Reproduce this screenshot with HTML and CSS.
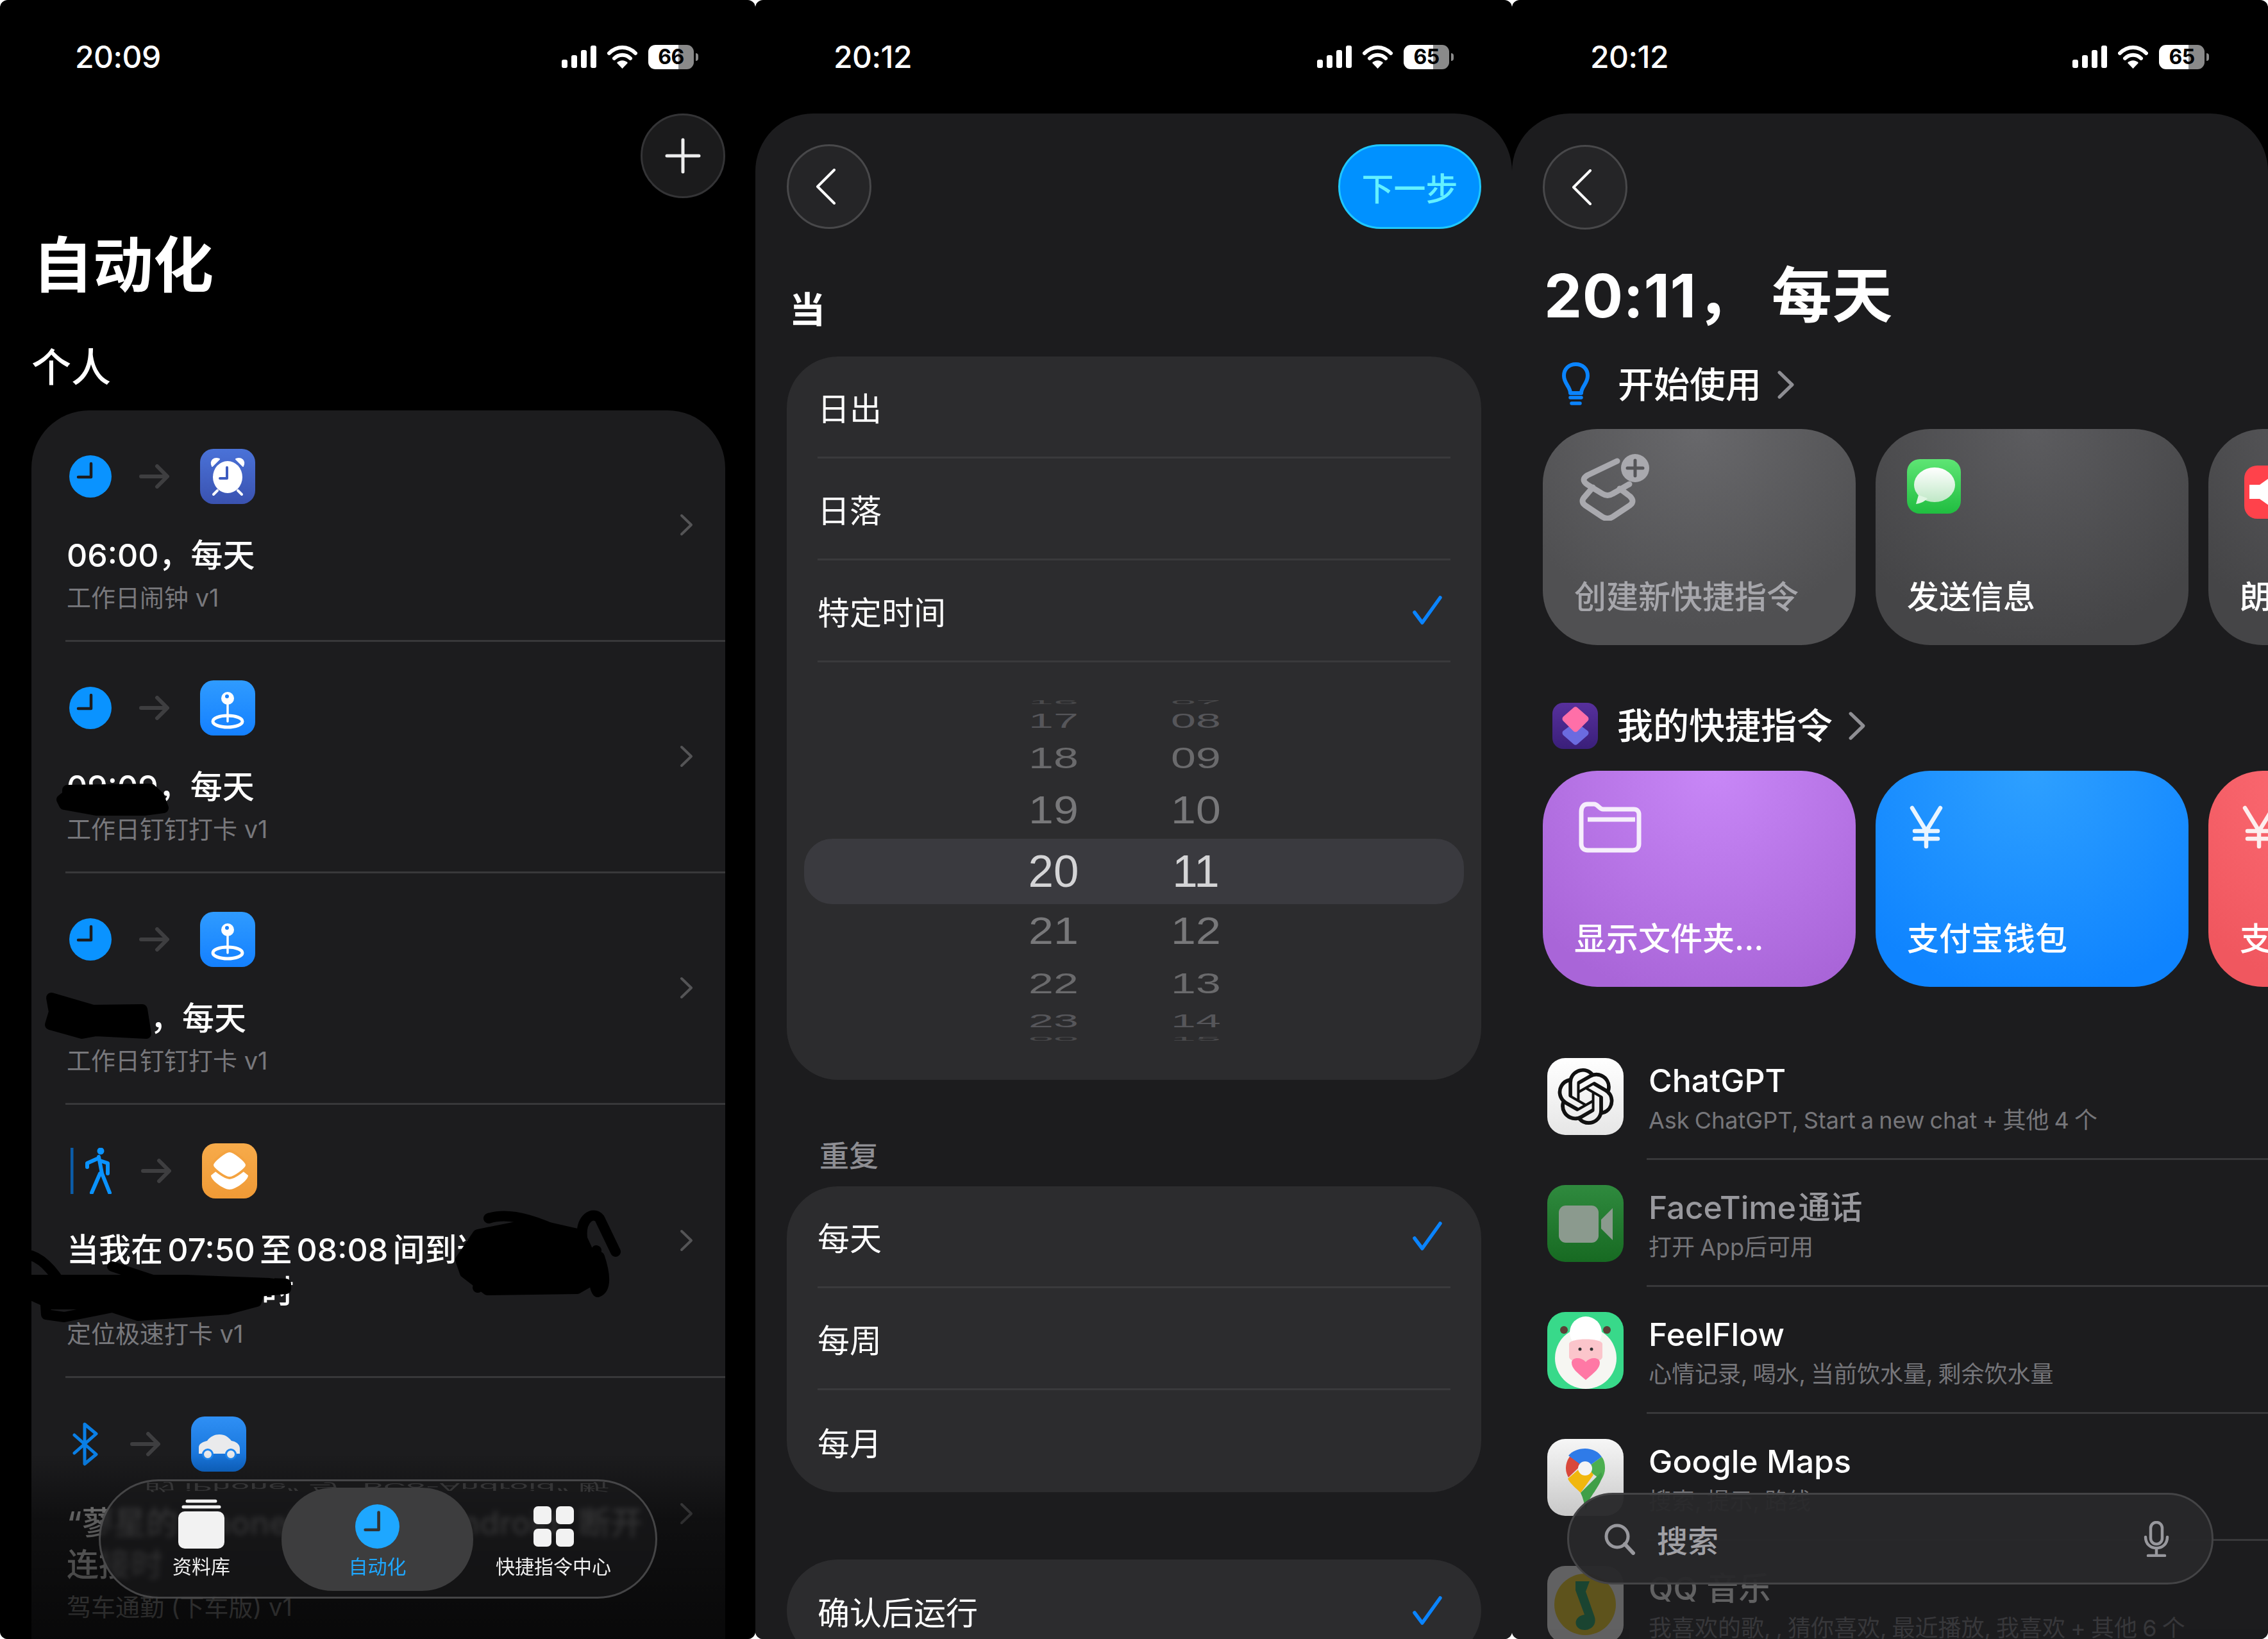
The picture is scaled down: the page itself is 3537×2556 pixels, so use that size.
FILE: index.html
```html
<!DOCTYPE html>
<html lang="zh-CN">
<head>
    <meta charset="UTF-8">
    <title>快捷指令</title>
    <link rel="stylesheet" href="styles.css">
</head>
<body>
    <svg class="sprites" width="0" height="0">
        <symbol id="signal" viewBox="0 0 54 35"><rect x="0" y="22" width="9" height="13" rx="3"/><rect x="15" y="15" width="9" height="20" rx="3"/><rect x="30" y="7" width="9" height="28" rx="3"/><rect x="45" y="0" width="9" height="35" rx="3"/></symbol>
        <symbol id="wifi" viewBox="0 0 47 36"><path d="M3 12C15 0 32 0 44 12" fill="none" stroke="#fff" stroke-width="6" stroke-linecap="round"/><path d="M11 20C18 13 29 13 36 20" fill="none" stroke="#fff" stroke-width="6" stroke-linecap="round"/><path d="M23.500 36L15 27C20 22 27 22 32 27Z" fill="#fff"/></symbol>
        <symbol id="clock" viewBox="0 0 66 66"><circle cx="33" cy="33" r="33" fill="#0a93ff"/><path d="M34 13V34H14" fill="none" stroke="#1c1c1e" stroke-width="4.500" stroke-linecap="round" stroke-linejoin="round"/></symbol>
        <symbol id="arrow" viewBox="0 0 47 38"><path d="M3 19H43M28 3L44 19L28 35" fill="none" stroke="#3e3e40" stroke-width="6" stroke-linecap="round" stroke-linejoin="round"/></symbol>
        <symbol id="chev" viewBox="0 0 21 35"><path d="M3 3L18 17.500L3 32" fill="none" stroke="currentColor" stroke-width="4" stroke-linecap="round" stroke-linejoin="round"/></symbol>
        <symbol id="back" viewBox="0 0 32 56"><path d="M29 2L3 28L29 54" fill="none" stroke="#fff" stroke-width="4" stroke-linecap="round" stroke-linejoin="round"/></symbol>
        <symbol id="check" viewBox="0 0 46 46"><path d="M3 26L15 42L43 3" fill="none" stroke="#0a84ff" stroke-width="5.500" stroke-linecap="round" stroke-linejoin="round"/></symbol>
        <symbol id="alarm" viewBox="0 0 86 86"><path d="M19 27C15 18 22 13 30 16ZM67 27C71 18 64 13 56 16Z" fill="#fff" stroke="#fff" stroke-width="2" stroke-linejoin="round"/><ellipse cx="43" cy="44" rx="23" ry="25" fill="#fff"/><path d="M27 65L21 71M59 65L65 71" stroke="#fff" stroke-width="4" stroke-linecap="round"/><path d="M42 29V46H31" fill="none" stroke="#3d5cc0" stroke-width="4" stroke-linecap="round" stroke-linejoin="round"/></symbol>
        <symbol id="pin" viewBox="0 0 86 86"><ellipse cx="43" cy="64" rx="23" ry="9" fill="none" stroke="#fff" stroke-width="5"/><path d="M43 36V64" stroke="#fff" stroke-width="3.500" stroke-linecap="round"/><circle cx="43" cy="28" r="10" fill="#fff"/><circle cx="42" cy="25" r="3" fill="#1a84ff"/></symbol>
        <symbol id="layers" viewBox="0 0 86 86"><path d="M14 50L29 38L43 47L57 38L72 50C72 58 52 72 43 72C34 72 14 58 14 50Z" fill="#fff"/><path d="M43 12C50 12 70 28 70 34C70 40 50 54 43 54C36 54 16 40 16 34C16 28 36 12 43 12Z" fill="#fff" stroke="#f4a340" stroke-width="4"/></symbol>
        <symbol id="car" viewBox="0 0 86 86"><path d="M12 58V48C12 42 20 39 25 38C30 31 37 28 44 28C53 28 58 32 63 38C70 39 76 43 76 50V58Z" fill="#eaeaec"/><circle cx="26" cy="59" r="7.500" fill="#eaeaec" stroke="#1e86f0" stroke-width="3"/><circle cx="62" cy="59" r="7.500" fill="#eaeaec" stroke="#1e86f0" stroke-width="3"/></symbol>
    </svg>

    <main class="screens">
        <!-- automations -->
        <section class="phone">
            <header class="status status-first">
                <span class="status-time">20:09</span>
                <span class="status-icons">
                    <svg class="ic-signal"><use href="#signal"/></svg>
                    <svg class="ic-wifi"><use href="#wifi"/></svg>
                    <span class="battery batt-66">66</span>
                </span>
            </header>
            <div class="top-actions">
                <button type="button" class="glass-btn"><svg width="56" height="56" viewBox="0 0 56 56"><path d="M28 3V53M3 28H53" stroke="#eee" stroke-width="5" stroke-linecap="round"/></svg></button>
            </div>
            <h1 class="auto-title">自动化</h1>
            <h2 class="auto-sub">个人</h2>
            <div class="auto-card">
                <div class="auto-row">
                    <div class="auto-main">
                        <div class="flow"><svg class="trig-clock"><use href="#clock"/></svg><svg class="flow-arrow"><use href="#arrow"/></svg><span class="app-ic bg-indigo"><svg><use href="#alarm"/></svg></span></div>
                        <div class="auto-name">06:00，每天</div>
                        <div class="auto-note">工作日闹钟 v1</div>
                    </div>
                    <svg class="row-chev"><use href="#chev"/></svg>
                </div>
                <div class="auto-row">
                    <div class="auto-main">
                        <div class="flow"><svg class="trig-clock"><use href="#clock"/></svg><svg class="flow-arrow"><use href="#arrow"/></svg><span class="app-ic bg-blue"><svg><use href="#pin"/></svg></span></div>
                        <div class="auto-name">09:09，每天</div>
                        <div class="auto-note">工作日钉钉打卡 v1</div>
                    </div>
                    <svg class="row-chev"><use href="#chev"/></svg>
                </div>
                <div class="auto-row">
                    <div class="auto-main">
                        <div class="flow"><svg class="trig-clock"><use href="#clock"/></svg><svg class="flow-arrow"><use href="#arrow"/></svg><span class="app-ic bg-blue"><svg><use href="#pin"/></svg></span></div>
                        <div class="auto-name"><span class="hidden-time"></span>，每天</div>
                        <div class="auto-note">工作日钉钉打卡 v1</div>
                    </div>
                    <svg class="row-chev"><use href="#chev"/></svg>
                </div>
                <div class="auto-row">
                    <div class="auto-main">
                        <div class="flow">
                            <svg class="trig-walk" viewBox="0 0 67 72"><path d="M2 0V72" stroke="#0b5ca8" stroke-width="5"/><circle cx="47" cy="5" r="5.500" fill="#0a93ff"/><path d="M44 14L49 40L61 70M46 40L33 70M44 16L26 24V30M46 20L58 24V40" fill="none" stroke="#0a93ff" stroke-width="6" stroke-linecap="round" stroke-linejoin="round"/></svg>
                            <svg class="flow-arrow"><use href="#arrow"/></svg><span class="app-ic bg-orange"><svg><use href="#layers"/></svg></span>
                        </div>
                        <div class="auto-name">当我在 07:50 至 08:08 间到达<br><span class="hidden-place"></span>时</div>
                        <div class="auto-note">定位极速打卡 v1</div>
                    </div>
                    <svg class="row-chev"><use href="#chev"/></svg>
                </div>
                <div class="auto-row auto-row-last">
                    <div class="auto-main">
                        <div class="flow">
                            <svg class="trig-bt" viewBox="0 0 40 68"><path d="M3 20L37 50L19 65V3L37 18L3 48" fill="none" stroke="#0a7fe6" stroke-width="5" stroke-linejoin="round" stroke-linecap="round"/></svg>
                            <svg class="flow-arrow"><use href="#arrow"/></svg><span class="app-ic bg-car"><svg><use href="#car"/></svg></span>
                        </div>
                        <div class="auto-name">“蓼星的 iPhone” 与 “BC8-Android” 断开<br>连接时</div>
                        <div class="auto-note">驾车通勤 (下车版) v1</div>
                    </div>
                    <svg class="row-chev"><use href="#chev"/></svg>
                </div>
            </div>

            <!-- marker scribbles over the private bits -->
            <svg class="scribbles" viewBox="0 0 1178 2556">
                <g fill="#000" stroke="#000" stroke-width="16" stroke-linecap="round" stroke-linejoin="round">
                    <path d="M105 1232L235 1230L248 1242L255 1260L225 1264L150 1264L100 1255L96 1247L105 1240Z"/>
                    <path d="M80 1556L145 1575L222 1574L228 1612L150 1608L128 1612L78 1598L84 1578Z"/>
                    <path d="M745 1925L830 1908L905 1925L935 1990L900 2010L760 2012L725 1985L718 1965Z"/>
                    <path fill="none" d="M762 1900C800 1888 850 1910 880 1925M908 1930C905 1900 925 1888 935 1900L960 1952M935 1960C945 1990 945 2010 932 2015C925 2010 925 1975 930 1950M745 2008L790 1975"/>
                    <path d="M49 1996L290 1996L340 1998L446 2002L446 2010L405 2014L400 2030L355 2042L215 2052L160 2034L80 2034L49 2020Z"/>
                    <path fill="none" d="M49 1958C70 1965 90 1990 105 2020M70 2020L72 2050L100 2054L190 2036M175 1975L280 2010"/>
                </g>
            </svg>
            <div class="fade-bottom"></div>

            <nav class="tabbar">
                <span class="tab-mirror">的 iPhone” 与 “BC8-Android” 断</span>
                <div class="tab tab-left">
                    <svg class="tab-ic" width="72" height="77" viewBox="0 0 72 77"><path d="M14 3H58M8 12H64" stroke="#f2f2f2" stroke-width="5" stroke-linecap="round"/><rect y="19" width="72" height="58" rx="10" fill="#f2f2f2"/></svg>
                    <span class="tab-label">资料库</span>
                </div>
                <div class="tab tab-on">
                    <svg class="tab-ic" width="69" height="69" viewBox="0 0 66 66"><circle cx="33" cy="33" r="33" fill="#1ea7ff"/><path d="M35 12V38H15" fill="none" stroke="#333" stroke-width="4.500" stroke-linecap="round" stroke-linejoin="round"/></svg>
                    <span class="tab-label">自动化</span>
                </div>
                <div class="tab tab-right">
                    <span class="tab-grid"><i></i><i></i><i></i><i></i></span>
                    <span class="tab-label">快捷指令中心</span>
                </div>
            </nav>
        </section>

        <!-- trigger picker -->
        <section class="phone">
            <header class="status status-mid">
                <span class="status-time">20:12</span>
                <span class="status-icons">
                    <svg class="ic-signal"><use href="#signal"/></svg>
                    <svg class="ic-wifi"><use href="#wifi"/></svg>
                    <span class="battery batt-65">65</span>
                </span>
            </header>
            <div class="sheet sheet-form">
                <div class="sheet-nav">
                    <button type="button" class="glass-btn glass-light"><svg class="ic-back"><use href="#back"/></svg></button>
                    <button type="button" class="next-btn">下一步</button>
                </div>
                <h2 class="when">当</h2>
                <div class="group">
                    <div class="opt"><span>日出</span></div>
                    <div class="opt"><span>日落</span></div>
                    <div class="opt"><span>特定时间</span><svg class="ic-check"><use href="#check"/></svg></div>
                    <div class="picker">
                        <div class="tick tick-0"><span>16</span><span>07</span></div>
                        <div class="tick tick-1"><span>17</span><span>08</span></div>
                        <div class="tick tick-2"><span>18</span><span>09</span></div>
                        <div class="tick tick-3"><span>19</span><span>10</span></div>
                        <div class="tick tick-now"><span>20</span><span>11</span></div>
                        <div class="tick tick-5"><span>21</span><span>12</span></div>
                        <div class="tick tick-6"><span>22</span><span>13</span></div>
                        <div class="tick tick-7"><span>23</span><span>14</span></div>
                        <div class="tick tick-8"><span>00</span><span>15</span></div>
                    </div>
                </div>
                <h3 class="group-head">重复</h3>
                <div class="group">
                    <div class="opt"><span>每天</span><svg class="ic-check"><use href="#check"/></svg></div>
                    <div class="opt"><span>每周</span></div>
                    <div class="opt opt-end"><span>每月</span></div>
                </div>
                <div class="group group-confirm">
                    <div class="opt opt-end"><span>确认后运行</span><svg class="ic-check"><use href="#check"/></svg></div>
                </div>
            </div>
        </section>

        <!-- add action -->
        <section class="phone">
            <header class="status status-last">
                <span class="status-time">20:12</span>
                <span class="status-icons">
                    <svg class="ic-signal"><use href="#signal"/></svg>
                    <svg class="ic-wifi"><use href="#wifi"/></svg>
                    <span class="battery batt-65">65</span>
                </span>
            </header>
            <div class="sheet sheet-actions">
                <div class="sheet-nav">
                    <button type="button" class="glass-btn glass-light"><svg class="ic-back"><use href="#back"/></svg></button>
                </div>
                <h1 class="action-title">20:11， 每天</h1>
                <div class="sec-head sec-start">
                    <svg class="ic-bulb" viewBox="0 0 43 70"><path d="M13 48C13 38 3 33 3 21C3 10 11 3 21.500 3C32 3 40 10 40 21C40 33 30 38 30 48Z" fill="none" stroke="#0a84ff" stroke-width="6" stroke-linejoin="round"/><path d="M13 55H30M15 64H28" stroke="#0a84ff" stroke-width="5.500" stroke-linecap="round"/></svg>
                    <span>开始使用</span>
                    <svg class="sec-chev"><use href="#chev"/></svg>
                </div>
                <div class="tiles">
                    <div class="tile tile-gray tile-muted">
                        <svg class="tile-ic-new" viewBox="0 0 112 104"><path d="M60 11L14 33Q2 40 14 48L37 62Q45 67 53 62L79 47M22 52L10 66Q2 74 10 80L37 98Q45 103 53 98L80 80Q88 74 80 66L64 54" fill="none" stroke="#a9a9ae" stroke-width="9" stroke-linejoin="round" stroke-linecap="round"/><circle cx="88" cy="22" r="22" fill="#a9a9ae"/><path d="M88 10V34M76 22H100" stroke="#555558" stroke-width="5" stroke-linecap="round"/></svg>
                        <span class="tile-label">创建新快捷指令</span>
                    </div>
                    <div class="tile tile-gray2">
                        <span class="msg-ic"><svg width="84" height="85" viewBox="0 0 84 85"><ellipse cx="43" cy="40" rx="32" ry="27" fill="url(#msgfill)"/><path d="M18 56L14 70C22 69 29 65 32 61Z" fill="#dff5e2"/><defs><linearGradient id="msgfill" x1="0" y1="0" x2="0" y2="1"><stop offset="0" stop-color="#fff"/><stop offset="1" stop-color="#bfe8c6"/></linearGradient></defs></svg></span>
                        <span class="tile-label">发送信息</span>
                    </div>
                    <div class="tile tile-gray3">
                        <span class="speak-ic"><svg width="84" height="83" viewBox="0 0 84 83"><path d="M8 30H24L52 10V72L24 52H8Z" fill="#fff"/></svg></span>
                        <span class="tile-label">朗读文本</span>
                    </div>
                </div>
                <div class="sec-head sec-mine">
                    <span class="sc-logo"><svg width="48" height="62" viewBox="0 0 48 62"><path d="M24 30L40 42L24 56L8 42Z" fill="#6b6be0" stroke="#6b6be0" stroke-width="9" stroke-linejoin="round"/><path d="M24 6L40 20L24 36L8 20Z" fill="#ff6fa8" stroke="#ff6fa8" stroke-width="9" stroke-linejoin="round"/></svg></span>
                    <span>我的快捷指令</span>
                    <svg class="sec-chev"><use href="#chev"/></svg>
                </div>
                <div class="tiles">
                    <div class="tile tile-purple">
                        <svg class="tile-ic-folder" viewBox="0 0 98 80"><path d="M4 16C4 8 8 4 14 4H24C30 4 32 12 38 12H86C91 12 94 15 94 20V66C94 72 90 76 84 76H14C8 76 4 72 4 66ZM14 28H88" fill="none" stroke="#f6eefc" stroke-width="7" stroke-linejoin="round"/></svg>
                        <span class="tile-label">显示文件夹...</span>
                    </div>
                    <div class="tile tile-blue">
                        <svg class="tile-ic-yen" viewBox="0 0 52 68"><path d="M4 4L26 40L48 4M26 40V64M8 40H44M8 52H44" fill="none" stroke="#eaf5ff" stroke-width="6.500" stroke-linecap="round" stroke-linejoin="round"/></svg>
                        <span class="tile-label">支付宝钱包</span>
                    </div>
                    <div class="tile tile-red">
                        <svg class="tile-ic-yen" viewBox="0 0 52 68"><path d="M4 4L26 40L48 4M26 40V64M8 40H44M8 52H44" fill="none" stroke="#fdeeee" stroke-width="6.500" stroke-linecap="round" stroke-linejoin="round"/></svg>
                        <span class="tile-label">支付宝</span>
                    </div>
                </div>

                <ul class="app-list">
                    <li class="app-row">
                        <span class="app-logo logo-gpt"><svg width="88" height="92" viewBox="0 0 24 24"><path fill="#111" d="M22.2819 9.8211a5.9847 5.9847 0 0 0-.5157-4.9108 6.0462 6.0462 0 0 0-6.5098-2.9A6.0651 6.0651 0 0 0 4.9807 4.1818a5.9847 5.9847 0 0 0-3.9977 2.9 6.0462 6.0462 0 0 0 .7427 7.0966 5.98 5.98 0 0 0 .511 4.9107 6.051 6.051 0 0 0 6.5146 2.9001A5.9847 5.9847 0 0 0 13.2599 24a6.0557 6.0557 0 0 0 5.7718-4.2058 5.9894 5.9894 0 0 0 3.9977-2.9001 6.0557 6.0557 0 0 0-.7475-7.0729zm-9.022 12.6081a4.4755 4.4755 0 0 1-2.8764-1.0408l.1419-.0804 4.7783-2.7582a.7948.7948 0 0 0 .3927-.6813v-6.7369l2.02 1.1686a.071.071 0 0 1 .038.052v5.5826a4.504 4.504 0 0 1-4.4945 4.4944zm-9.6607-4.1254a4.4708 4.4708 0 0 1-.5346-3.0137l.142.0852 4.783 2.7582a.7712.7712 0 0 0 .7806 0l5.8428-3.3685v2.3324a.0804.0804 0 0 1-.0332.0615L9.74 19.9502a4.4992 4.4992 0 0 1-6.1408-1.6464zM2.3408 7.8956a4.485 4.485 0 0 1 2.3655-1.9728V11.6a.7664.7664 0 0 0 .3879.6765l5.8144 3.3543-2.0201 1.1685a.0757.0757 0 0 1-.071 0l-4.8303-2.7865A4.504 4.504 0 0 1 2.3408 7.872zm16.5963 3.8558L13.1038 8.364 15.1192 7.2a.0757.0757 0 0 1 .071 0l4.8303 2.7913a4.4944 4.4944 0 0 1-.6765 8.1042v-5.6772a.79.79 0 0 0-.407-.667zm2.0107-3.0231l-.142-.0852-4.7735-2.7818a.7759.7759 0 0 0-.7854 0L9.409 9.2297V6.8974a.0662.0662 0 0 1 .0284-.0615l4.8303-2.7866a4.4992 4.4992 0 0 1 6.6802 4.66zM8.3065 12.863l-2.02-1.1638a.0804.0804 0 0 1-.038-.0567V6.0742a4.4992 4.4992 0 0 1 7.3757-3.4537l-.142.0805L8.704 5.459a.7948.7948 0 0 0-.3927.6813zm1.0976-2.3654l2.602-1.4998 2.6069 1.4998v2.9994l-2.5974 1.4997-2.6067-1.4997Z"/></svg></span>
                        <div class="app-text">
                            <div class="app-name">ChatGPT</div>
                            <div class="app-desc">Ask ChatGPT, Start a new chat + 其他 4 个</div>
                        </div>
                    </li>
                    <li class="app-row app-off">
                        <span class="app-logo logo-ft"><svg width="119" height="120" viewBox="0 0 119 120"><rect x="18" y="32" width="62" height="58" rx="11" fill="#8b9a8e"/><path d="M84 54L102 36V86L84 68Z" fill="#8b9a8e"/></svg></span>
                        <div class="app-text">
                            <div class="app-name app-name-tight">FaceTime 通话</div>
                            <div class="app-desc">打开 App后可用</div>
                        </div>
                    </li>
                    <li class="app-row">
                        <span class="app-logo logo-feel"><svg width="119" height="120" viewBox="0 0 119 120"><circle cx="26" cy="28" r="6" fill="#5a4036"/><circle cx="93" cy="28" r="6" fill="#5a4036"/><ellipse cx="60" cy="72" rx="48" ry="48" fill="#f6f6f2"/><circle cx="60" cy="32" r="25" fill="#fff"/><path d="M34 50C34 40 86 40 86 50V70C86 82 34 82 34 70Z" fill="#fbc5cb"/><circle cx="51" cy="58" r="2.500" fill="#333"/><circle cx="69" cy="58" r="2.500" fill="#333"/><path d="M60 106C46 94 38 88 38 79C38 71 52 69 60 78C68 69 82 71 82 79C82 88 74 94 60 106Z" fill="#ff78a5"/></svg></span>
                        <div class="app-text">
                            <div class="app-name">FeelFlow</div>
                            <div class="app-desc">心情记录, 喝水, 当前饮水量, 剩余饮水量</div>
                        </div>
                    </li>
                    <li class="app-row">
                        <span class="app-logo logo-maps"><svg width="119" height="120" viewBox="0 0 119 120"><path d="M59 16C42 16 29 29 29 46C29 52 31 56 33 60L60 34Z" fill="#d9483b"/><path d="M33 26C39 19 48 15 59 15C70 15 80 20 85 28L60 46Z" fill="#2f7be8"/><path d="M85 28C89 33 90 40 90 46C90 52 88 58 84 64L60 46Z" fill="#4caf50"/><path d="M32 62L60 38L72 56L52 84C44 76 36 70 32 62Z" fill="#f1b70e"/><path d="M52 84L84 52C89 60 80 72 74 82C68 90 62 100 60 112C58 102 56 92 52 84Z" fill="#3f9f48"/><circle cx="59" cy="46" r="11" fill="#f4f4f4"/></svg></span>
                        <div class="app-text">
                            <div class="app-name">Google Maps</div>
                            <div class="app-desc">搜索, 提示, 路线</div>
                        </div>
                    </li>
                    <li class="app-row app-dim">
                        <span class="app-logo logo-qq"><svg width="119" height="120" viewBox="0 0 119 120"><ellipse cx="59" cy="60" rx="48" ry="48" fill="#f7d31a"/><path d="M44 24H66L60 40L74 80C78 96 62 104 50 98C40 92 44 78 58 76L44 38Z" fill="#17a05d"/></svg></span>
                        <div class="app-text">
                            <div class="app-name">QQ 音乐</div>
                            <div class="app-desc">我喜欢的歌, , 猜你喜欢, 最近播放, 我喜欢 + 其他 6 个</div>
                        </div>
                    </li>
                </ul>

                <div class="search-pill">
                    <svg class="ic-search" viewBox="0 0 50 50"><circle cx="21" cy="21" r="17" fill="none" stroke="#98989d" stroke-width="5"/><path d="M33 33L46 47" stroke="#98989d" stroke-width="6" stroke-linecap="round"/></svg>
                    <span class="search-word">搜索</span>
                    <svg class="ic-mic" viewBox="0 0 40 56"><rect x="11" y="2" width="18" height="34" rx="9" fill="none" stroke="#98989d" stroke-width="4.500"/><path d="M3 25C3 48 37 48 37 25M20 43V53M7 54H33" fill="none" stroke="#98989d" stroke-width="4.500" stroke-linecap="round"/></svg>
                </div>
            </div>
        </section>
    </main>
</body>
</html>
```

FILE: styles.css
```css
* {
    box-sizing: border-box;
}

html, body {
    margin: 0;
    padding: 0;
    width: 3537px;
    height: 2556px;
    overflow: hidden;
    background: #fff;
}

body {
    font-family: Inter, "Noto Sans CJK SC", sans-serif;
    color: #fff;
}

h1, h2, h3, ul {
    margin: 0;
    padding: 0;
}

button {
    font-family: inherit;
    padding: 0;
}

.sprites {
    position: absolute;
}

.screens {
    display: grid;
    grid-template-columns: 1178px 1180px 1179px;
    height: 2556px;
}

.phone {
    position: relative;
    display: flex;
    flex-direction: column;
    height: 2556px;
    background: #000;
    border-radius: 12px;
    overflow: hidden;
}

/* status bar */
.status {
    flex: none;
    display: flex;
    align-items: center;
    justify-content: space-between;
    height: 177px;
}

.status-first {
    padding: 0 89px 0 117px;
}

.status-mid {
    padding: 0 91px 0 122px;
}

.status-last {
    padding: 0 92px 0 122px;
}

.status-time {
    font-size: 48px;
    font-weight: 500;
    letter-spacing: -0.5px;
}

.status-icons {
    display: flex;
    align-items: center;
}

.ic-signal {
    width: 54px;
    height: 35px;
    fill: #fff;
}

.ic-wifi {
    width: 47px;
    height: 36px;
    margin-left: 17px;
}

.battery {
    position: relative;
    width: 71px;
    height: 38px;
    margin-left: 17px;
    margin-right: 7px;
    border-radius: 11px;
    color: #000;
    font-size: 32px;
    font-weight: 700;
    line-height: 38px;
    text-align: center;
    letter-spacing: -0.5px;
}

.battery::after {
    content: "";
    position: absolute;
    right: -7px;
    top: 13px;
    width: 4px;
    height: 12px;
    border-radius: 0 4px 4px 0;
    background: #8a8a8a;
}

.batt-66 {
    background: linear-gradient(90deg, #fff 66%, #8a8a8a 66%);
}

.batt-65 {
    background: linear-gradient(90deg, #fff 65%, #8a8a8a 65%);
}

/* round toolbar buttons */
.glass-btn {
    display: flex;
    align-items: center;
    justify-content: center;
    width: 132px;
    height: 132px;
    border-radius: 50%;
    border: 3px solid #343436;
    background: #1b1b1c;
}

.glass-light {
    border-color: #48484a;
    background: #252527;
}

.ic-back {
    width: 32px;
    height: 56px;
    margin-right: 10px;
}

/* automations */
.top-actions {
    flex: none;
    display: flex;
    justify-content: flex-end;
    padding-right: 47px;
}

.auto-title {
    flex: none;
    margin-top: 50px;
    padding-left: 51px;
    font-size: 94px;
    font-weight: 700;
    line-height: 110px;
}

.auto-sub {
    flex: none;
    margin-top: 70px;
    padding-left: 49px;
    font-size: 62px;
    font-weight: 500;
    line-height: 70px;
}

.auto-card {
    flex: 1;
    margin: 31px 47px 0 49px;
    background: #1c1c1e;
    border-radius: 90px 90px 0 0;
}

.auto-row {
    display: flex;
    align-items: center;
    justify-content: space-between;
    margin-left: 53px;
    padding: 60px 0 43px 2px;
    border-bottom: 3px solid #38383a;
}

.auto-row-last {
    border-bottom: 0;
}

.auto-main {
    min-width: 0;
}

.flow {
    display: flex;
    align-items: center;
    height: 86px;
}

.trig-clock {
    width: 66px;
    height: 66px;
    margin-left: 4px;
}

.trig-walk {
    width: 67px;
    height: 72px;
    margin-left: 6px;
}

.trig-bt {
    width: 40px;
    height: 68px;
    margin: 0 7px 0 9px;
}

.flow-arrow {
    width: 47px;
    height: 38px;
    margin: 0 48px 0 43px;
}

.app-ic {
    display: block;
    width: 86px;
    height: 86px;
    border-radius: 21px;
}

.app-ic svg {
    display: block;
    width: 86px;
    height: 86px;
}

.bg-indigo {
    background: linear-gradient(#4a72d8, #3a52b0);
}

.bg-blue {
    background: linear-gradient(#2f9bff, #1480ff);
}

.bg-orange {
    background: linear-gradient(#f7ab4a, #f09a36);
}

.bg-car {
    background: linear-gradient(#2f90f5, #0f6ad0);
}

.auto-name {
    margin-top: 48px;
    font-size: 50px;
    font-weight: 500;
    line-height: 65px;
    word-spacing: -6px;
    white-space: nowrap;
}

.auto-note {
    margin-top: 10px;
    color: #78787c;
    font-size: 38px;
    line-height: 46px;
}

.auto-row-last .auto-name {
    color: #aaa;
}

.auto-row-last .auto-note {
    color: #7a7a7a;
}

.hidden-time {
    display: inline-block;
    width: 130px;
}

.hidden-place {
    display: inline-block;
    width: 304px;
}

.row-chev {
    flex: none;
    width: 21px;
    height: 35px;
    margin: 0 50px 18px 0;
    color: #545456;
}

.scribbles {
    position: absolute;
    left: 0;
    top: 0;
    width: 1178px;
    height: 2556px;
}

.fade-bottom {
    position: absolute;
    left: 0;
    right: 0;
    bottom: 0;
    height: 290px;
    background: linear-gradient(rgba(0, 0, 0, 0), rgba(0, 0, 0, 0.45) 35%, rgba(0, 0, 0, 0.7));
}

/* floating tab bar */
.tabbar {
    position: absolute;
    left: 154px;
    top: 2307px;
    display: grid;
    grid-template-columns: 282px 299px 284px;
    align-items: center;
    width: 871px;
    height: 186px;
    border: 3px solid rgba(110, 110, 112, 0.55);
    border-radius: 93px;
    background: rgba(26, 26, 27, 0.62);
    backdrop-filter: blur(4px);
    overflow: hidden;
}

.tab-mirror {
    position: absolute;
    left: 68px;
    top: -26px;
    color: rgba(255, 255, 255, 0.13);
    font-size: 49px;
    white-space: nowrap;
    transform: scaleY(-0.32);
}

.tab {
    position: relative;
    display: flex;
    flex-direction: column;
    align-items: center;
    justify-content: flex-end;
    height: 161px;
    padding-bottom: 20px;
}

.tab-left {
    padding-left: 32px;
}

.tab-right {
    padding-right: 34px;
}

.tab-on {
    border-radius: 80px;
    background: #3d3d3e;
}

.tab-ic {
    display: block;
}

.tab-grid {
    display: grid;
    grid-template-columns: 28px 28px;
    grid-auto-rows: 28px;
    gap: 7px;
    margin-bottom: 3px;
}

.tab-grid i {
    border-radius: 7px;
    background: #f2f2f2;
}

.tab-label {
    margin-top: 10px;
    color: #f0f0f0;
    font-size: 30px;
    line-height: 36px;
    white-space: nowrap;
}

.tab-on .tab-label {
    color: #1ea7ff;
}

/* sheets */
.sheet {
    position: relative;
    flex: 1;
    min-height: 0;
    background: #1c1c1e;
    border-radius: 90px 90px 0 0;
    overflow: hidden;
}

.sheet-nav {
    display: flex;
    align-items: center;
    justify-content: space-between;
    height: 132px;
}

.sheet-form {
    padding: 48px 48px 0 49px;
}

.next-btn {
    width: 223px;
    height: 132px;
    border: 3px solid #1fc8ff;
    border-radius: 66px;
    background: #0091ff;
    color: #63f0ff;
    font-size: 50px;
    font-weight: 500;
}

.when {
    margin-top: 91px;
    padding-left: 4px;
    font-size: 56px;
    font-weight: 700;
    line-height: 70px;
}

.group {
    margin-top: 38px;
    padding: 0 48px;
    background: #2c2c2e;
    border-radius: 80px;
}

.opt {
    display: flex;
    align-items: center;
    justify-content: space-between;
    height: 159px;
    padding: 0 13px 0 0;
    border-bottom: 3px solid #3a3a3c;
    font-size: 50px;
}

.opt-end {
    border-bottom: 0;
}

.ic-check {
    width: 46px;
    height: 46px;
}

/* time wheel */
.picker {
    margin: 0 -48px;
    padding: 55px 0 54px;
    font-family: "Liberation Sans", Arial, sans-serif;
    font-size: 70px;
}

.tick {
    display: flex;
    padding-left: 356px;
    gap: 102px;
}

.tick span {
    display: block;
    width: 120px;
    text-align: center;
    color: #78787a;
}

.tick-0 { height: 14px; line-height: 14px; }
.tick-1 { height: 44px; line-height: 44px; }
.tick-2 { height: 72px; line-height: 72px; }
.tick-3 { height: 90px; line-height: 90px; }
.tick-5 { height: 84px; line-height: 84px; }
.tick-6 { height: 80px; line-height: 80px; }
.tick-7 { height: 36px; line-height: 36px; }
.tick-8 { height: 20px; line-height: 20px; }

.tick-0 span { color: #4a4a4c; transform: scaleY(0.14); }
.tick-1 span { color: #56565a; transform: scaleY(0.44); }
.tick-2 span { color: #6a6a6c; transform: scaleY(0.66); }
.tick-3 span { transform: scaleY(0.86); }
.tick-5 span { transform: scaleY(0.84); }
.tick-6 span { color: #6a6a6c; transform: scaleY(0.64); }
.tick-7 span { color: #56565a; transform: scaleY(0.42); }
.tick-8 span { color: #4a4a4c; transform: scaleY(0.12); }

.tick-now {
    height: 102px;
    margin: 0 27px;
    padding-left: 329px;
    border-radius: 44px;
    background: #3a3a3f;
    line-height: 102px;
}

.tick-now span {
    color: #d4d4d6;
    font-size: 71px;
}

.group-head {
    margin-top: 88px;
    padding-left: 51px;
    color: #8e8e93;
    font-size: 46px;
    font-weight: 500;
    line-height: 60px;
}

.group-head + .group {
    margin-top: 18px;
}

.group-confirm {
    margin-top: 105px;
}

/* actions sheet */
.sheet-actions {
    padding-top: 49px;
}

.sheet-actions .sheet-nav {
    padding-left: 48px;
}

.action-title {
    margin-top: 48px;
    padding-left: 50px;
    font-size: 94px;
    font-weight: 700;
    line-height: 110px;
    letter-spacing: 0.5px;
}

.sec-head {
    display: flex;
    align-items: center;
    font-weight: 500;
    font-size: 56px;
}

.sec-head > span:not(.sc-logo) {
    margin-bottom: 10px;
}

.sec-chev {
    width: 28px;
    height: 46px;
    margin-left: 24px;
    color: #8e8e93;
}

.sec-start {
    height: 70px;
    margin-top: 49px;
    padding-left: 78px;
}

.ic-bulb {
    width: 43px;
    height: 70px;
    margin-right: 44px;
}

.sec-mine {
    height: 72px;
    margin-top: 90px;
    padding-left: 63px;
}

.sc-logo {
    display: flex;
    align-items: center;
    justify-content: center;
    width: 71px;
    height: 72px;
    margin-right: 30px;
    border-radius: 17px;
    background: linear-gradient(#57309c, #3a1f7a);
}

.tiles {
    display: flex;
    gap: 31px;
    margin-top: 34px;
    padding-left: 48px;
}

.tile {
    position: relative;
    flex: none;
    display: flex;
    flex-direction: column;
    justify-content: space-between;
    width: 488px;
    height: 337px;
    padding: 39px 20px 45px 49px;
    border-radius: 85px;
    font-size: 50px;
    font-weight: 500;
}

.tile-label {
    line-height: 60px;
    white-space: nowrap;
}

.tile-muted {
    color: #a6a6ab;
}

.tile-gray {
    background: radial-gradient(circle at 50% 0, #68686b, #505052 75%);
}

.tile-gray2 {
    background: radial-gradient(circle at 50% 0, #5c5c5f, #454547 80%);
}

.tile-gray3 {
    background: radial-gradient(circle at 50% 0, #5c5c5f, #454547 80%);
}

.tile-purple {
    background: radial-gradient(circle at 55% 0, #c887f7, #a965d8 85%);
}

.tile-blue {
    background: radial-gradient(circle at 50% 0, #2ea0ff, #0f84ff 85%);
}

.tile-red {
    background: radial-gradient(circle at 50% 0, #ff7078, #f0575f 85%);
}

.tile-ic-new {
    width: 112px;
    height: 104px;
    margin-left: 7px;
}

.msg-ic {
    display: block;
    width: 84px;
    height: 85px;
    margin-top: 8px;
    border-radius: 20px;
    background: linear-gradient(#5ee574, #20bd40);
}

.speak-ic {
    display: block;
    width: 84px;
    height: 83px;
    margin: 18px 0 0 7px;
    border-radius: 20px;
    background: #ff424b;
}

.tile-ic-folder {
    width: 98px;
    height: 80px;
    margin: 9px 0 0 7px;
}

.tile-ic-yen {
    width: 52px;
    height: 68px;
    margin: 15px 0 0 4px;
}

/* app list */
.app-list {
    list-style: none;
    margin-top: 72px;
}

.app-row {
    display: flex;
    height: 198px;
    padding-left: 55px;
}

.app-logo {
    flex: none;
    display: flex;
    align-items: center;
    justify-content: center;
    width: 119px;
    height: 120px;
    margin-top: 39px;
    border-radius: 28px;
    overflow: hidden;
}

.app-text {
    flex: 1;
    margin-left: 36px;
    padding: 44px 0 0 3px;
    border-bottom: 3px solid #38383a;
}

.app-name {
    font-size: 50px;
    font-weight: 500;
    line-height: 60px;
}

.app-name-tight {
    word-spacing: -10px;
}

.app-desc {
    margin-top: 9px;
    color: #76767a;
    font-size: 36px;
    line-height: 46px;
    word-spacing: -2px;
    white-space: nowrap;
}

.app-off .app-name {
    color: #98989d;
}

.logo-gpt {
    background: linear-gradient(#fff, #e6e6e6);
}

.logo-ft {
    background: linear-gradient(#2f8a3e, #176a22);
}

.logo-feel {
    background: #38d98a;
}

.logo-maps {
    background: linear-gradient(#f6f6f6, #c8c8c8);
}

.logo-qq {
    background: #fff;
}

.app-dim {
    opacity: 0.3;
}

/* floating search */
.search-pill {
    position: absolute;
    left: 86px;
    top: 2151px;
    display: flex;
    align-items: center;
    width: 1008px;
    height: 143px;
    padding: 0 66px 0 54px;
    border: 3px solid #444446;
    border-radius: 72px;
    background: rgba(40, 40, 42, 0.96);
}

.ic-search {
    width: 50px;
    height: 50px;
}

.search-word {
    flex: 1;
    margin-left: 33px;
    color: #a0a0a5;
    font-size: 48px;
    font-weight: 500;
}

.ic-mic {
    width: 40px;
    height: 56px;
}
```
